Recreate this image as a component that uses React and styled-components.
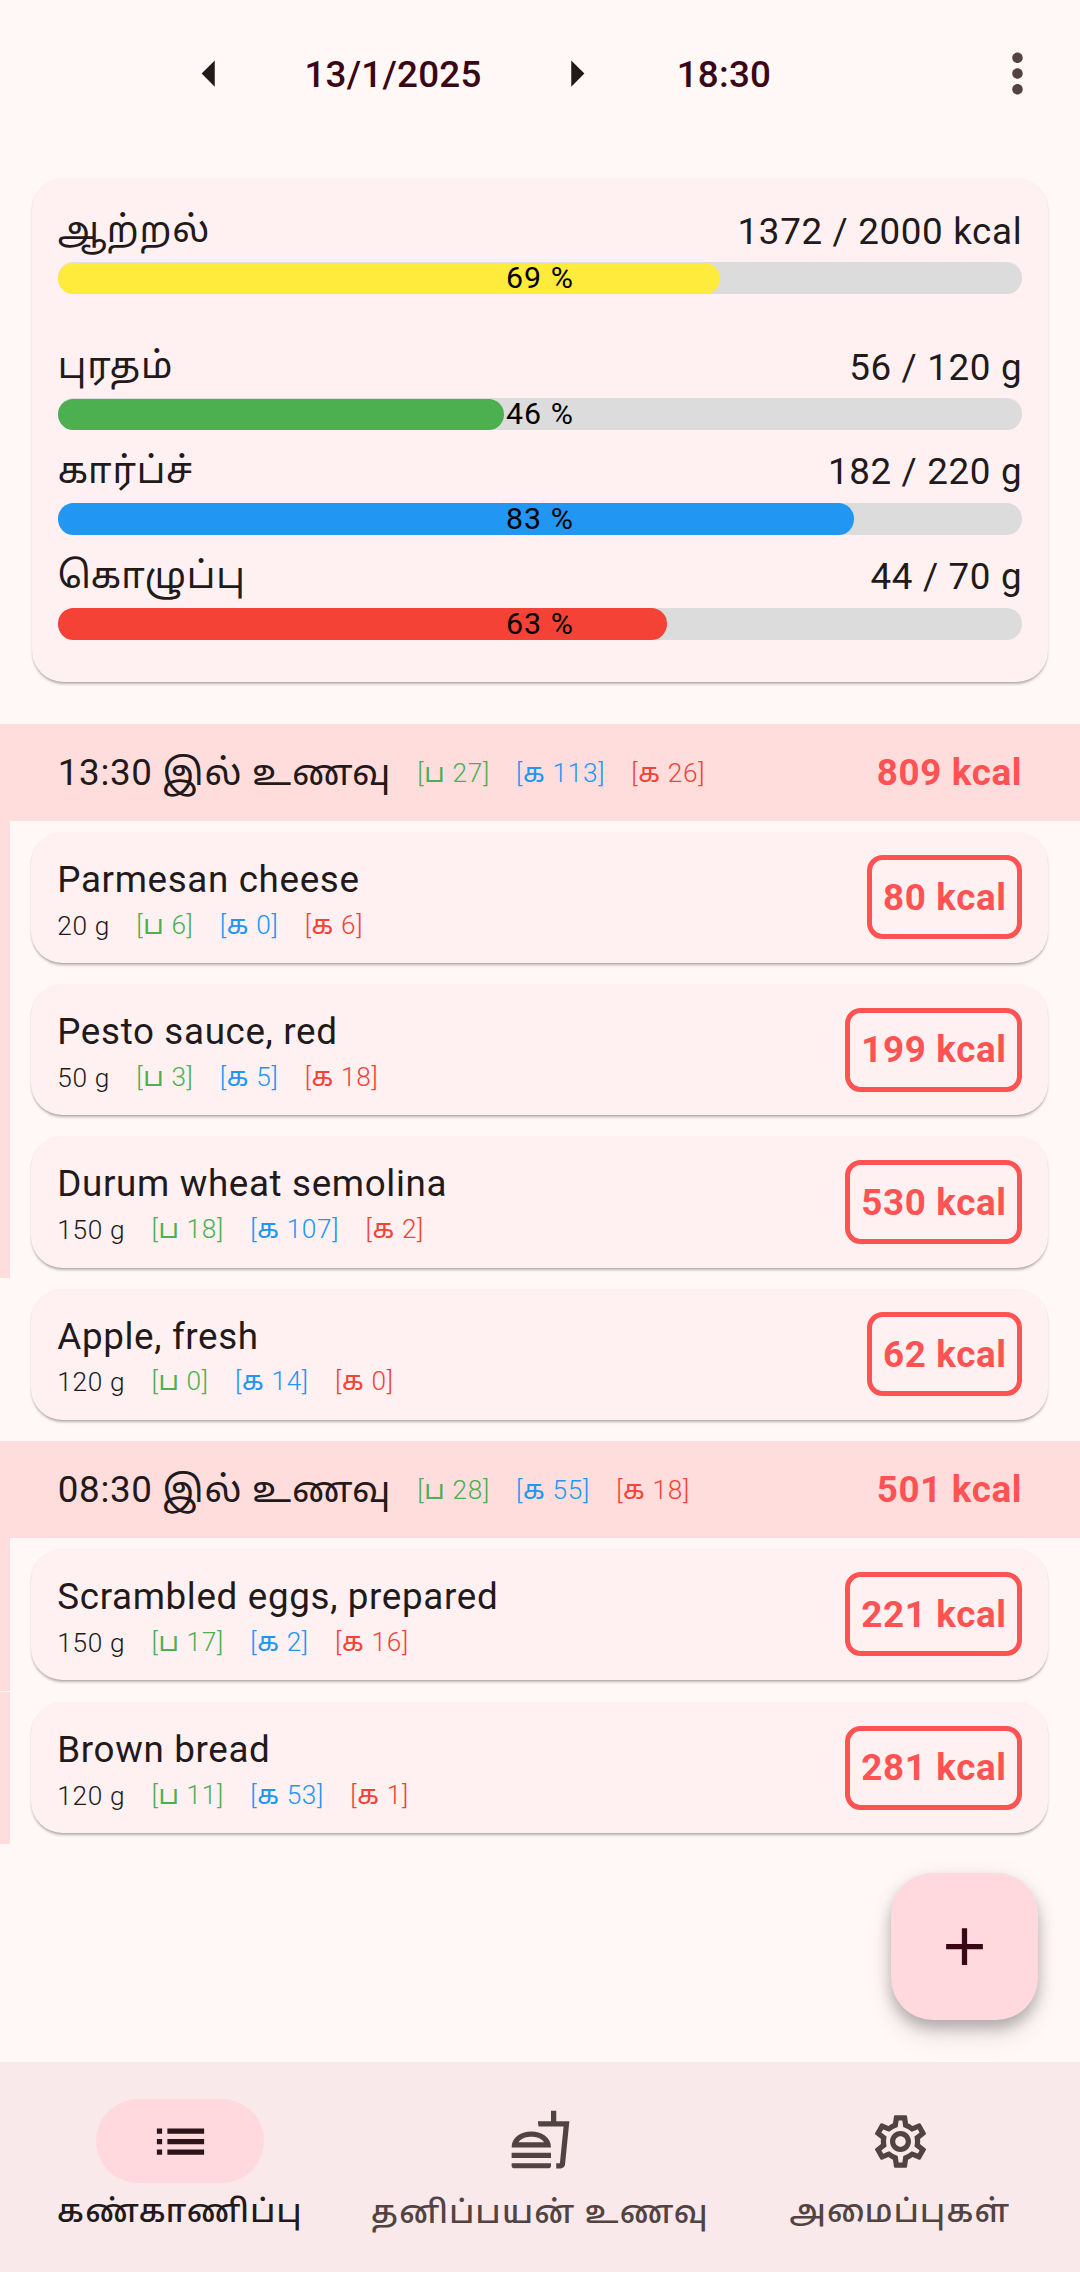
import React from "react";
import styled, { createGlobalStyle } from "styled-components";
import {
  MdArrowLeft,
  MdArrowRight,
  MdMoreVert,
  MdAdd,
  MdList,
  MdOutlineFastfood,
  MdOutlineSettings,
} from "react-icons/md";

const GlobalStyle = createGlobalStyle`
  * { box-sizing: border-box; }
  body {
    margin: 0;
    background: #fff8f7;
    color: #22191a;
    font-family: Roboto, "Noto Sans Tamil", "Noto Sans", sans-serif;
  }
`;

const Screen = styled.div`
  width: 1080px;
  height: 2272px;
  display: flex;
  flex-direction: column;
  position: relative;
  overflow: hidden;
`;

const TopBar = styled.header`
  height: 147px;
  flex: none;
  display: flex;
  align-items: center;
  padding: 0 31.5px 0 178px;
  color: #22191a;
`;

const TopButton = styled.button`
  width: ${(p) => p.$width}px;
  border: 0;
  padding: 1px 0 0;
  background: none;
  color: #3b0716;
  font: 500 36.75px/43px Roboto, sans-serif;
  letter-spacing: 0.26px;
  text-align: center;
`;

const MoreButton = styled.span`
  margin-left: auto;
  display: flex;
  color: #524343;
`;

const Summary = styled.section`
  flex: none;
  height: 504px;
  margin: 31px 32px 42.3px 31.5px;
  padding: 31.6px 25.75px 0 26.25px;
  border-radius: 31.5px;
  background: #fff0f1;
  box-shadow: 0 3px 3px -1px rgba(0, 0, 0, 0.26), 0 1px 2px rgba(0, 0, 0, 0.1);
`;

const Nutrient = styled.div`
  margin-bottom: ${(p) => p.$gap}px;
`;

const NutrientHead = styled.div`
  height: 43px;
  display: flex;
  justify-content: space-between;
  margin-bottom: 9.7px;
  font-size: 36.75px;
  line-height: 43px;
  letter-spacing: 0.66px;
`;

const NutrientName = styled.span`
  margin-top: -1.3px;
  letter-spacing: 0.8px;
`;

const Tamil = styled.span`
  font-weight: 400;
`;

const Track = styled.div`
  height: 31.5px;
  display: grid;
  align-items: center;
  border-radius: 15.75px;
  background: #dcdcdc;
`;

const Fill = styled.div`
  grid-area: 1 / 1;
  height: 31.5px;
  border-radius: 15.75px;
  background: ${(p) => p.$color};
`;

const Percent = styled.span`
  grid-area: 1 / 1;
  text-align: center;
  color: #000;
  font-size: 30.3px;
  line-height: 36px;
  margin: -2px 0;
  letter-spacing: 1.1px;
`;

const MealBand = styled.div`
  flex: none;
  height: 97px;
  display: flex;
  align-items: baseline;
  padding: 27px 57.75px 0;
  margin-top: ${(p) => p.$gap || 0}px;
  background: #ffdddd;
  font-size: 36.75px;
  line-height: 43px;
  letter-spacing: 0.66px;
`;

const MealKcal = styled.strong`
  margin-left: auto;
  color: #ff5252;
  font-weight: 700;
`;

const Macros = styled.span`
  display: inline-flex;
  gap: 26.25px;
  margin-left: 26.25px;
  font-weight: 300;
  font-size: 26.25px;
  line-height: 31px;
  letter-spacing: 0.66px;
  position: relative;
  top: ${(p) => p.$lift || 0}px;
`;

const Macro = styled.span`
  color: ${(p) => p.$color};
  white-space: nowrap;
`;

const Item = styled.div`
  flex: none;
  height: 152.25px;
  padding: 10.5px 32px 10.5px 21px;
  margin-top: ${(p) => (p.$divided ? 1 : 0)}px;
  border-left: 10.5px solid ${(p) => (p.$marked ? "#ffdddd" : "transparent")};
`;

const ItemCard = styled.div`
  height: 131.25px;
  display: flex;
  align-items: flex-start;
  justify-content: space-between;
  padding: 23.6px 25.75px 0 26.25px;
  border-radius: 31.5px;
  background: #fff0f1;
  box-shadow: 0 3px 3px -1px rgba(0, 0, 0, 0.26), 0 1px 2px rgba(0, 0, 0, 0.1);
`;

const ItemName = styled.div`
  margin-top: 2.4px;
  font-size: 36.75px;
  line-height: 43px;
  letter-spacing: 0.66px;
`;

const ItemDetail = styled.div`
  display: flex;
  align-items: baseline;
  margin-top: 9.8px;
  font-size: 26.25px;
  font-weight: 300;
  line-height: 31px;
  letter-spacing: 0.66px;
`;

const KcalBox = styled.div`
  height: 84px;
  padding: 0.7px 10.5px 0 11.5px;
  border: 5.25px solid #ff5252;
  border-radius: 15.75px;
  color: #ff5252;
  font-size: 36.75px;
  font-weight: 700;
  line-height: 74px;
  letter-spacing: 0.66px;
`;

const AddButton = styled.button`
  position: absolute;
  right: 42px;
  bottom: 252px;
  width: 147px;
  height: 147px;
  display: grid;
  place-items: center;
  padding: 0;
  border: 0;
  border-radius: 42px;
  background: #ffd9de;
  color: #3b0716;
  box-shadow: 0 8px 13px rgba(0, 0, 0, 0.2), 0 16px 26px rgba(0, 0, 0, 0.1), 0 3px 24px rgba(0, 0, 0, 0.06);
`;

const NavBar = styled.nav`
  flex: none;
  height: 210px;
  margin-top: auto;
  display: grid;
  grid-template-columns: repeat(3, 1fr);
  background: #f9e9ea;
`;

const NavItem = styled.div`
  display: flex;
  flex-direction: column;
  align-items: center;
  padding-top: 37px;
  color: ${(p) => (p.$active ? "#22191a" : "#524343")};
`;

const NavPill = styled.div`
  width: 168px;
  height: 84px;
  display: grid;
  place-items: center;
  border-radius: 42px;
  color: ${(p) => (p.$active ? "#2c1519" : "#524343")};
  background: ${(p) => (p.$active ? "#ffd9de" : "transparent")};
  padding-bottom: ${(p) => p.$raise || 0}px;
`;

const NavLabel = styled.span`
  margin-top: ${(p) => p.$offset || 7.5}px;
  font-size: 31.5px;
  font-weight: 500;
  line-height: 42px;
  letter-spacing: 1.31px;
  white-space: nowrap;
`;

const GREEN = "#4caf50";
const BLUE = "#2196f3";
const RED = "#f44336";

const nutrients = [
  { label: "ஆற்றல்", value: "1372 / 2000 kcal", percent: 69, fill: 68.65, color: "#ffeb3b", gap: 51.8 },
  { label: "புரதம்", value: "56 / 120 g", percent: 46, fill: 46.3, color: GREEN, gap: 20.7 },
  { label: "கார்ப்ச்", value: "182 / 220 g", percent: 83, fill: 82.55, color: BLUE, gap: 20.7 },
  { label: "கொழுப்பு", value: "44 / 70 g", percent: 63, fill: 63.15, color: RED, gap: 0 },
];

const meals = [
  {
    time: "13:30",
    macros: [27, 113, 26],
    kcal: 809,
    items: [
      { name: "Parmesan cheese", grams: 20, macros: [6, 0, 6], kcal: 80, marked: true },
      { name: "Pesto sauce, red", grams: 50, macros: [3, 5, 18], kcal: 199, marked: true },
      { name: "Durum wheat semolina", grams: 150, macros: [18, 107, 2], kcal: 530, marked: true },
      { name: "Apple, fresh", grams: 120, macros: [0, 14, 0], kcal: 62, marked: false },
    ],
  },
  {
    time: "08:30",
    macros: [28, 55, 18],
    kcal: 501,
    gap: 11,
    items: [
      { name: "Scrambled eggs, prepared", grams: 150, macros: [17, 2, 16], kcal: 221, marked: true },
      { name: "Brown bread", grams: 120, macros: [11, 53, 1], kcal: 281, marked: true, divided: true },
    ],
  },
];

function MacroList({ values, lift }) {
  const [protein, carbs, fat] = values;
  return (
    <Macros $lift={lift}>
      <Macro $color={GREEN}>[<Tamil>ப</Tamil> {protein}]</Macro>
      <Macro $color={BLUE}>[<Tamil>க</Tamil> {carbs}]</Macro>
      <Macro $color={RED}>[<Tamil>க</Tamil> {fat}]</Macro>
    </Macros>
  );
}

function FoodItem({ item }) {
  return (
    <Item $marked={item.marked} $divided={item.divided}>
      <ItemCard>
        <div>
          <ItemName>{item.name}</ItemName>
          <ItemDetail>
            {item.grams} g
            <MacroList values={item.macros} lift={-1} />
          </ItemDetail>
        </div>
        <KcalBox>{item.kcal} kcal</KcalBox>
      </ItemCard>
    </Item>
  );
}

export default function App() {
  return (
    <Screen>
      <GlobalStyle />
      <TopBar>
        <MdArrowLeft size={63} />
        <TopButton $width={304}>13/1/2025</TopButton>
        <MdArrowRight size={63} />
        <TopButton $width={232}>18:30</TopButton>
        <MoreButton>
          <MdMoreVert size={63} />
        </MoreButton>
      </TopBar>

      <Summary>
        {nutrients.map((n) => (
          <Nutrient key={n.label} $gap={n.gap}>
            <NutrientHead>
              <NutrientName>{n.label}</NutrientName>
              <span>{n.value}</span>
            </NutrientHead>
            <Track>
              <Fill $color={n.color} style={{ width: `${n.fill}%` }} />
              <Percent>{n.percent} %</Percent>
            </Track>
          </Nutrient>
        ))}
      </Summary>

      {meals.map((meal) => (
        <React.Fragment key={meal.time}>
          <MealBand $gap={meal.gap}>
            <span>
              {meal.time} <Tamil>இல் உணவு</Tamil>
            </span>
            <MacroList values={meal.macros} lift={-3} />
            <MealKcal>{meal.kcal} kcal</MealKcal>
          </MealBand>
          {meal.items.map((item) => (
            <FoodItem key={item.name} item={item} />
          ))}
        </React.Fragment>
      ))}

      <AddButton>
        <MdAdd size={63} />
      </AddButton>

      <NavBar>
        <NavItem $active>
          <NavPill $active>
            <MdList size={63} />
          </NavPill>
          <NavLabel>கண்காணிப்பு</NavLabel>
        </NavItem>
        <NavItem>
          <NavPill $raise={4}>
            <MdOutlineFastfood size={63} />
          </NavPill>
          <NavLabel $offset={8.5}>தனிப்பயன் உணவு</NavLabel>
        </NavItem>
        <NavItem>
          <NavPill>
            <MdOutlineSettings size={63} />
          </NavPill>
          <NavLabel>அமைப்புகள்</NavLabel>
        </NavItem>
      </NavBar>
    </Screen>
  );
}
